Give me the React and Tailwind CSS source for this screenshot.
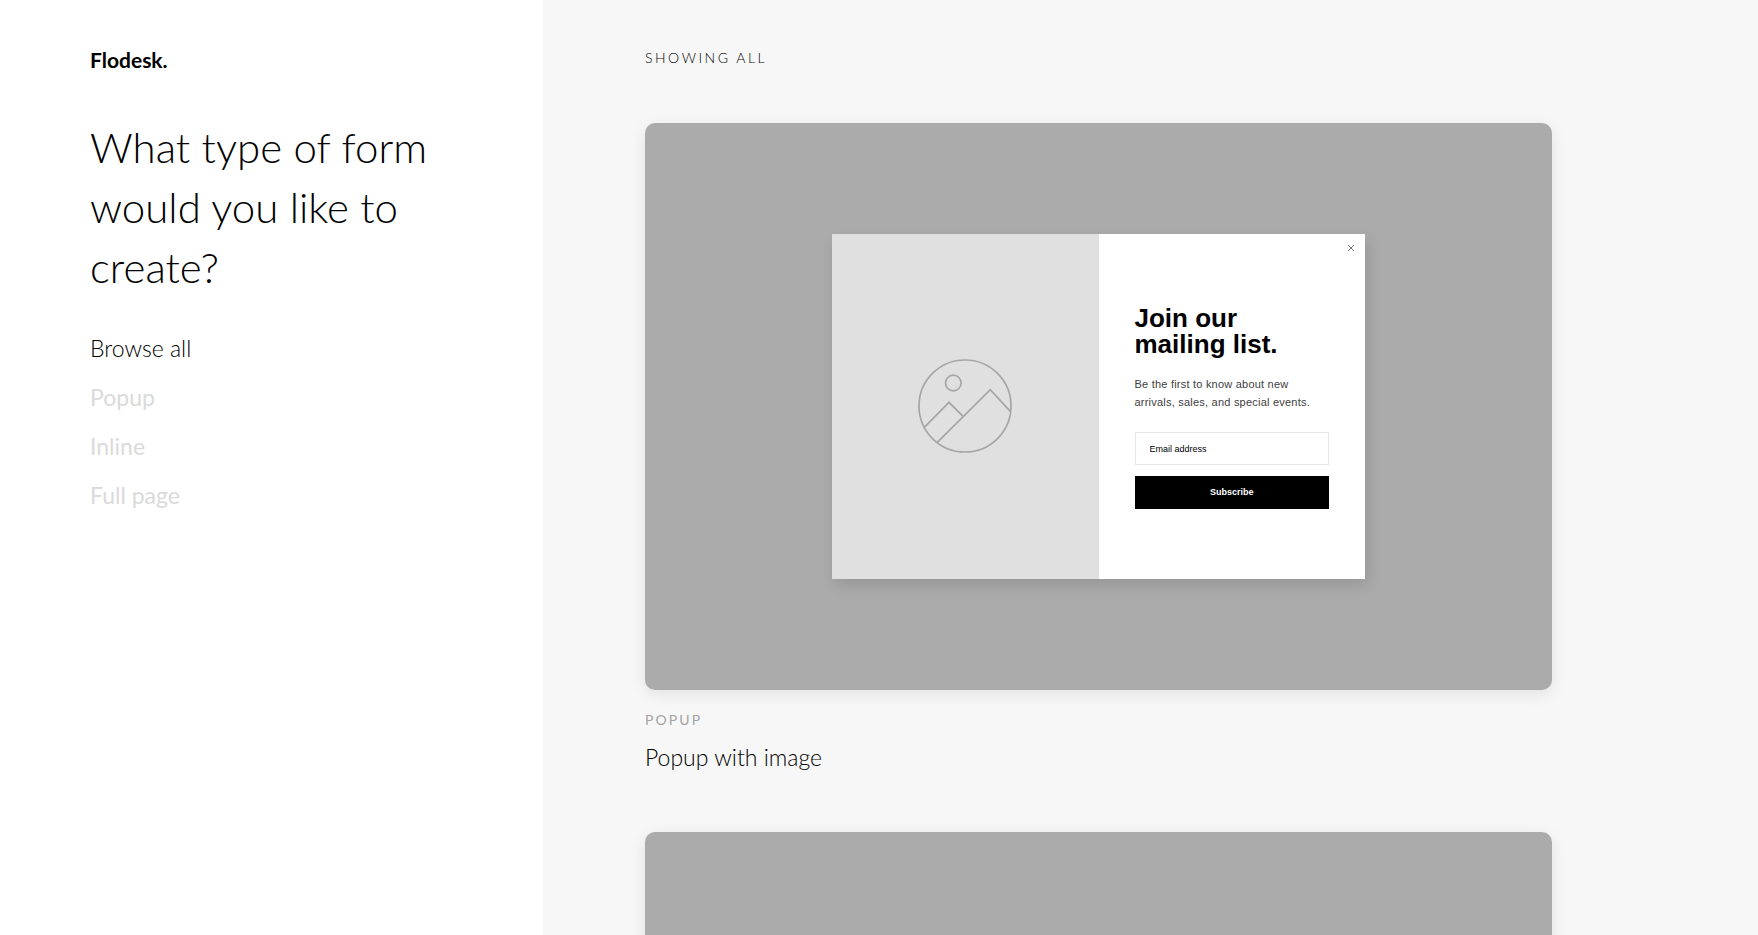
const FILTERS = ['Browse all', 'Popup', 'Inline', 'Full page'];

function ImagePlaceholder() {
  return (
    <svg
      viewBox="0 0 94 94"
      className="h-[94px] w-[94px]"
      fill="none"
      stroke="#a6a6a6"
      strokeWidth="1.7"
      aria-hidden="true"
    >
      <circle cx="47" cy="47" r="46" />
      <circle cx="35.3" cy="24" r="7.8" />
      <path d="M6.3 68.3 31 43.3 45 57.3" />
      <path d="M19.3 83.3 72.3 30.7 92.3 52.3" />
    </svg>
  );
}

function PopupPreview() {
  return (
    <div className="relative grid h-[345px] w-[533px] grid-cols-2 bg-white shadow-[3px_6px_14px_rgba(0,0,0,0.12)]">
      <div className="flex items-center justify-center bg-[#e0e0e0]">
        <ImagePlaceholder />
      </div>

      <form className="flex flex-col justify-center px-9 pt-0.5 font-['Liberation_Sans',Arial,sans-serif]">
        <h3 className="text-[26px] leading-[26px] font-bold text-black">
          Join our mailing list.
        </h3>
        <p className="mt-[18px] text-[11px] leading-[18px] tracking-[0.02em] text-[#404040]">
          Be the first to know about new arrivals, sales, and special events.
        </p>
        <input
          type="email"
          aria-label="Email address"
          placeholder="Email address"
          className="mt-[21px] h-[33px] w-full border border-[#e6e6e6] bg-white px-[14px] text-[9px] text-black outline-none placeholder:text-black"
        />
        <button type="button" className="mt-[11px] h-[33px] w-full bg-black text-[9px] font-bold text-white">
          Subscribe
        </button>
      </form>

      {/* Close */}
      <button type="button" aria-label="Close" className="absolute top-[10px] right-[10px]">
        <svg viewBox="0 0 8 8" className="h-2 w-2" fill="none" stroke="#777777" strokeWidth="1">
          <path d="M1 1 7 7M7 1 1 7" />
        </svg>
      </button>
    </div>
  );
}

function FormCard({ type, title, children }) {
  return (
    <article>
      <div className="flex aspect-[8/5] items-center justify-center rounded-[10px] bg-[#ababab] shadow-[0_4px_16px_rgba(0,0,0,0.09)]">
        {children}
      </div>
      {type && <p className="mt-5 text-sm leading-5 tracking-[0.15em] text-[#a3a3a3] uppercase">{type}</p>}
      {title && <h2 className="mt-[11px] text-[23px] leading-8 font-light text-black">{title}</h2>}
    </article>
  );
}

export default function App() {
  return (
    <div className="grid h-screen grid-cols-[543fr_1215fr] overflow-hidden bg-[#f7f7f7] font-['Lato',sans-serif]">
      <aside className="bg-white pr-16 pl-[90px]">
        <a href="#" className="mt-12 block text-[21px] leading-6 font-bold text-black">
          Flodesk.
        </a>
        <h1 className="mt-[45px] text-[42px] leading-[60px] font-light text-black">
          What type of form would you like to create?
        </h1>
        <nav className="mt-[35px] flex flex-col items-start gap-[17px]">
          {FILTERS.map((label, i) => (
            <a
              key={label}
              href="#"
              className={`text-[23px] leading-8 ${i === 0 ? 'font-light text-black' : 'text-[#dadada]'}`}
            >
              {label}
            </a>
          ))}
        </nav>
      </aside>

      <main className="overflow-y-auto pr-[206px] pl-[102px] [scrollbar-width:none]">
        <p className="mt-12 text-sm leading-5 font-light tracking-[0.18em] text-black">SHOWING ALL</p>
        <div className="mt-[55px] flex flex-col gap-[59px]">
          <FormCard type="Popup" title="Popup with image">
            <PopupPreview />
          </FormCard>
          <FormCard />
        </div>
      </main>
    </div>
  );
}
